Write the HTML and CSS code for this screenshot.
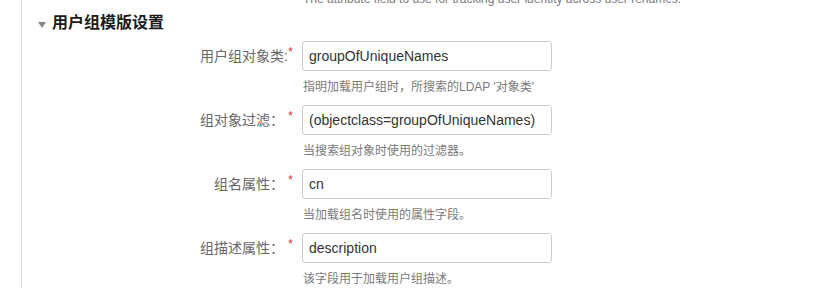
FILE: index.html
```html
<!DOCTYPE html>
<html lang="zh-CN">
<head>
  <meta charset="UTF-8">
  <title>用户组模版设置</title>
  <link rel="stylesheet" href="styles.css">
</head>
<body>
  <div class="panel">
    <div class="row prev">
      <span></span>
      <div class="help">The attribute field to use for tracking user identity across user renames.</div>
    </div>

    <h2 class="section"><span class="caret"></span>用户组模版设置</h2>

    <div class="row">
      <label for="groupClass">用户组对象类:<span class="req">*</span></label>
      <div class="field">
        <input type="text" id="groupClass" value="groupOfUniqueNames">
        <div class="help">指明加载用户组时，所搜索的LDAP '对象类'</div>
      </div>
    </div>

    <div class="row">
      <label for="groupFilter">组对象过滤： <span class="req">*</span></label>
      <div class="field">
        <input type="text" id="groupFilter" value="(objectclass=groupOfUniqueNames)">
        <div class="help">当搜索组对象时使用的过滤器。</div>
      </div>
    </div>

    <div class="row">
      <label for="groupName">组名属性： <span class="req">*</span></label>
      <div class="field">
        <input type="text" id="groupName" value="cn">
        <div class="help">当加载组名时使用的属性字段。</div>
      </div>
    </div>

    <div class="row">
      <label for="groupDesc">组描述属性： <span class="req">*</span></label>
      <div class="field">
        <input type="text" id="groupDesc" value="description">
        <div class="help">该字段用于加载用户组描述。</div>
      </div>
    </div>
  </div>
</body>
</html>
```

FILE: styles.css
```css
:root {
  --line: #dddddd;
  --label: #666666;
  --help: #7a7a7a;
  --text: #333333;
  --req: #d04437;
}

* {
  box-sizing: border-box;
}

body {
  margin: 0;
  font-family: "Liberation Sans", "Noto Sans CJK SC", sans-serif;
  background: #fff;
  color: var(--text);
  overflow: hidden;
}

.panel {
  margin-left: 21px;
  border-left: 1px solid var(--line);
  min-height: 100vh;
}

.section {
  display: flex;
  align-items: center;
  gap: 6px;
  margin: 4px 0 7px;
  padding-left: 16px;
  font-size: 16px;
  line-height: 22px;
  font-weight: bold;
  color: #1a1a1a;
}

.caret {
  width: 0;
  height: 0;
  border-left: 4px solid transparent;
  border-right: 4px solid transparent;
  border-top: 6px solid #888;
  margin-top: 4px;
}

.row {
  display: grid;
  grid-template-columns: 271px 250px;
  column-gap: 9px;
  margin-bottom: 9px;
}

.row.prev {
  margin-top: -10px;
  margin-bottom: 0;
}

label {
  font-size: 14px;
  line-height: 30px;
  height: 30px;
  text-align: right;
  color: var(--label);
  white-space: nowrap;
}

.req {
  color: var(--req);
  font-size: 13px;
  vertical-align: top;
  line-height: 22px;
}

input[type="text"] {
  display: block;
  width: 250px;
  height: 30px;
  padding: 4px 6px;
  border: 1px solid #cccccc;
  border-radius: 3px;
  font-family: inherit;
  font-size: 14px;
  color: var(--text);
  background: #fff;
}

.help {
  margin-top: 7px;
  font-size: 12px;
  line-height: 18px;
  color: var(--help);
  white-space: nowrap;
  padding-left: 1px;
}

.prev .help {
  margin-top: 0;
}
```
